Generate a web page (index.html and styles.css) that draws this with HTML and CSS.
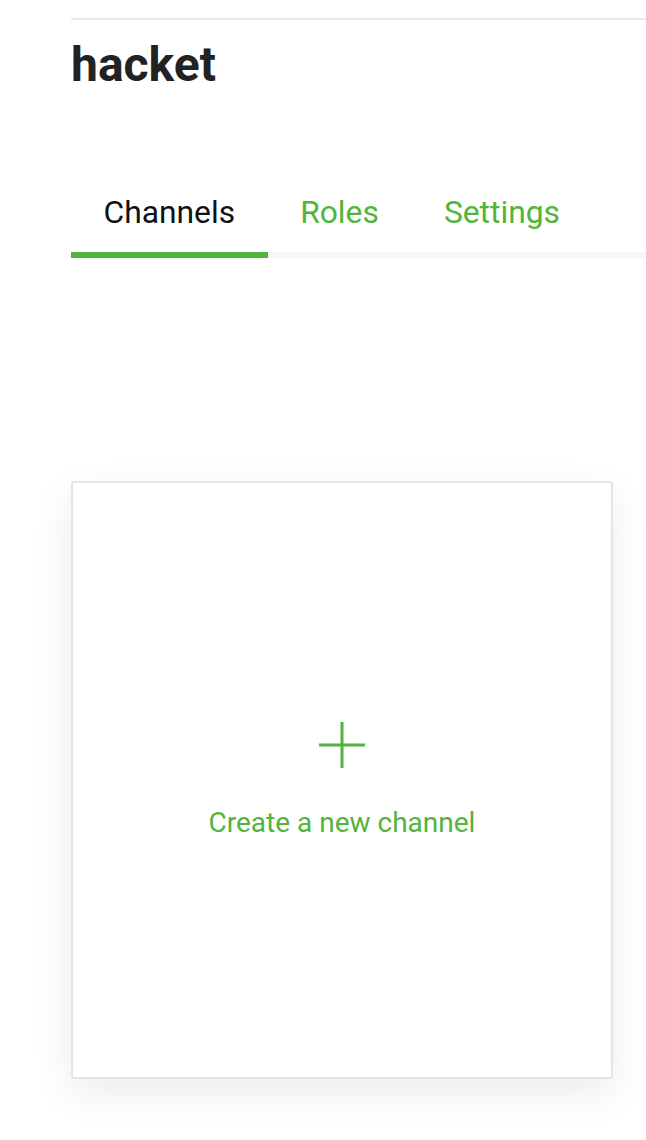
FILE: index.html
```html
<!DOCTYPE html>
<html>
<head>
<meta charset="utf-8">
<link rel="stylesheet" href="styles.css">
</head>
<body>
<div class="page">
  <header class="header">
    <h1 class="title">hacket</h1>
  </header>
  <nav class="tabs">
    <a class="tab active">Channels</a>
    <a class="tab">Roles</a>
    <a class="tab">Settings</a>
    <span class="tab-rest"></span>
  </nav>
  <div class="content">
    <div class="card">
      <svg class="plus" width="46" height="46" viewBox="0 0 46 46"><path d="M23 0V46M0 23H46" stroke="#52b43a" stroke-width="3" fill="none"/></svg>
      <div class="card-label">Create a new channel</div>
    </div>
  </div>
</div>
</body>
</html>
```
FILE: styles.css
```css
html, body { margin: 0; padding: 0; background: #fff; }
body { font-family: Roboto, "Noto Sans", sans-serif; }
.page { padding: 18px 0 61px 71px; }
.header { border-top: 2px solid #ebebeb; padding-top: 16px; }
.title { margin: 0; font-size: 48px; font-weight: 700; line-height: 58px; color: #222; }
.tabs { display: flex; margin-top: 94px; }
.tab { font-size: 31.8px; line-height: 48px; padding: 0 32.5px 16px; color: #52b43a; border-bottom: 6px solid #f6f6f6; }
.tab.active { color: #111; border-bottom-color: #52b43a; }
.tab-rest { flex: 1; border-bottom: 6px solid #f6f6f6; }
.content { padding-top: 223px; }
.card { width: 542px; height: 598px; box-sizing: border-box; border: 2px solid #e2e5e9; border-radius: 3px; box-shadow: 0 14px 40px rgba(0,0,0,0.08); display: flex; flex-direction: column; align-items: center; justify-content: center; }
.card-label { color: #52b43a; font-size: 28px; line-height: 33px; margin-top: 38px; }
```
